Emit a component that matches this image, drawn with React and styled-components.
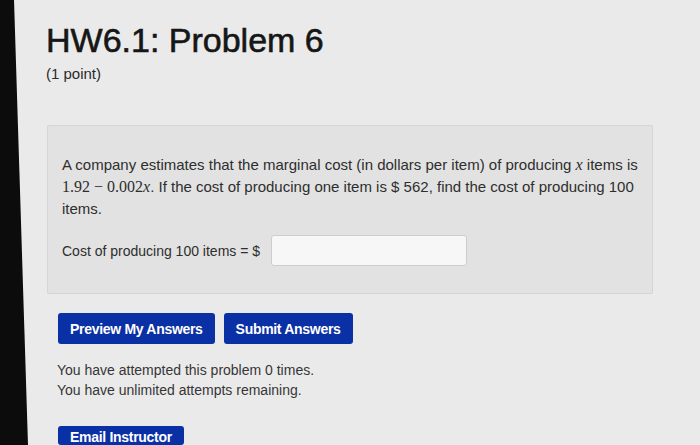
import styled, { createGlobalStyle } from 'styled-components';

const GlobalStyle = createGlobalStyle`
  html, body {
    margin: 0;
    padding: 0;
    background: #eaeaea;
    font-family: "Liberation Sans", Arial, sans-serif;
    color: #2c2c2c;
  }
`;

const Screen = styled.div`
  display: flex;
  width: 700px;
  height: 445px;
  overflow: hidden;
  background: #eaeaea;
`;

/* the edge of the monitor in the photo */
const Bezel = styled.div`
  flex: 0 0 28px;
  background: #0c0c0c;
  clip-path: polygon(0 0, 14px 0, 28px 100%, 0 100%);
`;

const Content = styled.div`
  flex: 1;
  padding: 21px 0 0 18px;
  display: flex;
  flex-direction: column;
  align-items: flex-start;
`;

const Title = styled.h1`
  margin: 0;
  font-size: 34px;
  line-height: 39px;
  font-weight: 400;
  color: #161616;
  -webkit-text-stroke: 0.6px #161616;
`;

const Points = styled.div`
  margin-top: 5px;
  font-size: 15px;
  line-height: 18px;
  color: #2a2a2a;
`;

const ProblemBox = styled.div`
  margin-top: 42px;
  margin-left: 1px;
  width: 606px;
  box-sizing: border-box;
  padding: 28px 14px 27px 14px;
  background: #e2e2e2;
  border: 1px solid #d5d5d5;
  border-radius: 2px;
`;

const Statement = styled.p`
  margin: 0;
  font-size: 15px;
  line-height: 22px;
  color: #2e2e2e;
`;

const MathText = styled.span`
  font-family: "Liberation Serif", "Times New Roman", serif;
  font-size: 16px;
  white-space: nowrap;
`;

const MathVar = styled.i`
  font-family: "Liberation Serif", "Times New Roman", serif;
  font-size: 16px;
`;

const AnswerRow = styled.div`
  margin-top: 15px;
  display: flex;
  align-items: center;
  gap: 11px;
  font-size: 14px;
  color: #2e2e2e;
`;

const AnswerInput = styled.input`
  width: 196px;
  height: 31px;
  box-sizing: border-box;
  background: #f7f7f7;
  border: 1px solid #cdcdcd;
  border-radius: 3px;
  outline: none;
`;

const ButtonRow = styled.div`
  margin-top: 19px;
  margin-left: 12px;
  display: flex;
  gap: 9px;
`;

const BlueButton = styled.button`
  height: 31px;
  padding: 0 ${props => props.$pad || 10}px;
  background: #0a30a6;
  color: #ffffff;
  border: none;
  border-radius: 3px;
  font-family: "Liberation Sans", Arial, sans-serif;
  font-size: 14px;
  font-weight: 700;
  letter-spacing: -0.3px;
`;

const Attempts = styled.div`
  margin-top: 16px;
  margin-left: 11px;
  font-size: 14px;
  line-height: 20px;
  color: #363636;
`;

const EmailButton = styled(BlueButton)`
  margin-top: 26px;
  margin-left: 12px;
  height: 36px;
  padding: 2px 12px 0;
  align-self: flex-start;
`;

const App = () => {
  return (
    <Screen>
      <GlobalStyle />
      <Bezel />
      <Content>
        <Title>HW6.1: Problem 6</Title>
        <Points>(1 point)</Points>
        <ProblemBox>
          <Statement>
            A company estimates that the marginal cost (in dollars per item) of producing{' '}
            <MathVar>x</MathVar> items is{' '}
            <MathText>
              1.92 − 0.002<MathVar>x</MathVar>
            </MathText>
            . If the cost of producing one item is $ 562, find the cost of producing 100 items.
          </Statement>
          <AnswerRow>
            <span>Cost of producing 100 items = $</span>
            <AnswerInput type="text" />
          </AnswerRow>
        </ProblemBox>
        <ButtonRow>
          <BlueButton $pad={12}>Preview My Answers</BlueButton>
          <BlueButton $pad={12}>Submit Answers</BlueButton>
        </ButtonRow>
        <Attempts>
          You have attempted this problem 0 times.
          <br />
          You have unlimited attempts remaining.
        </Attempts>
        <EmailButton>Email Instructor</EmailButton>
      </Content>
    </Screen>
  );
};

export default App;
